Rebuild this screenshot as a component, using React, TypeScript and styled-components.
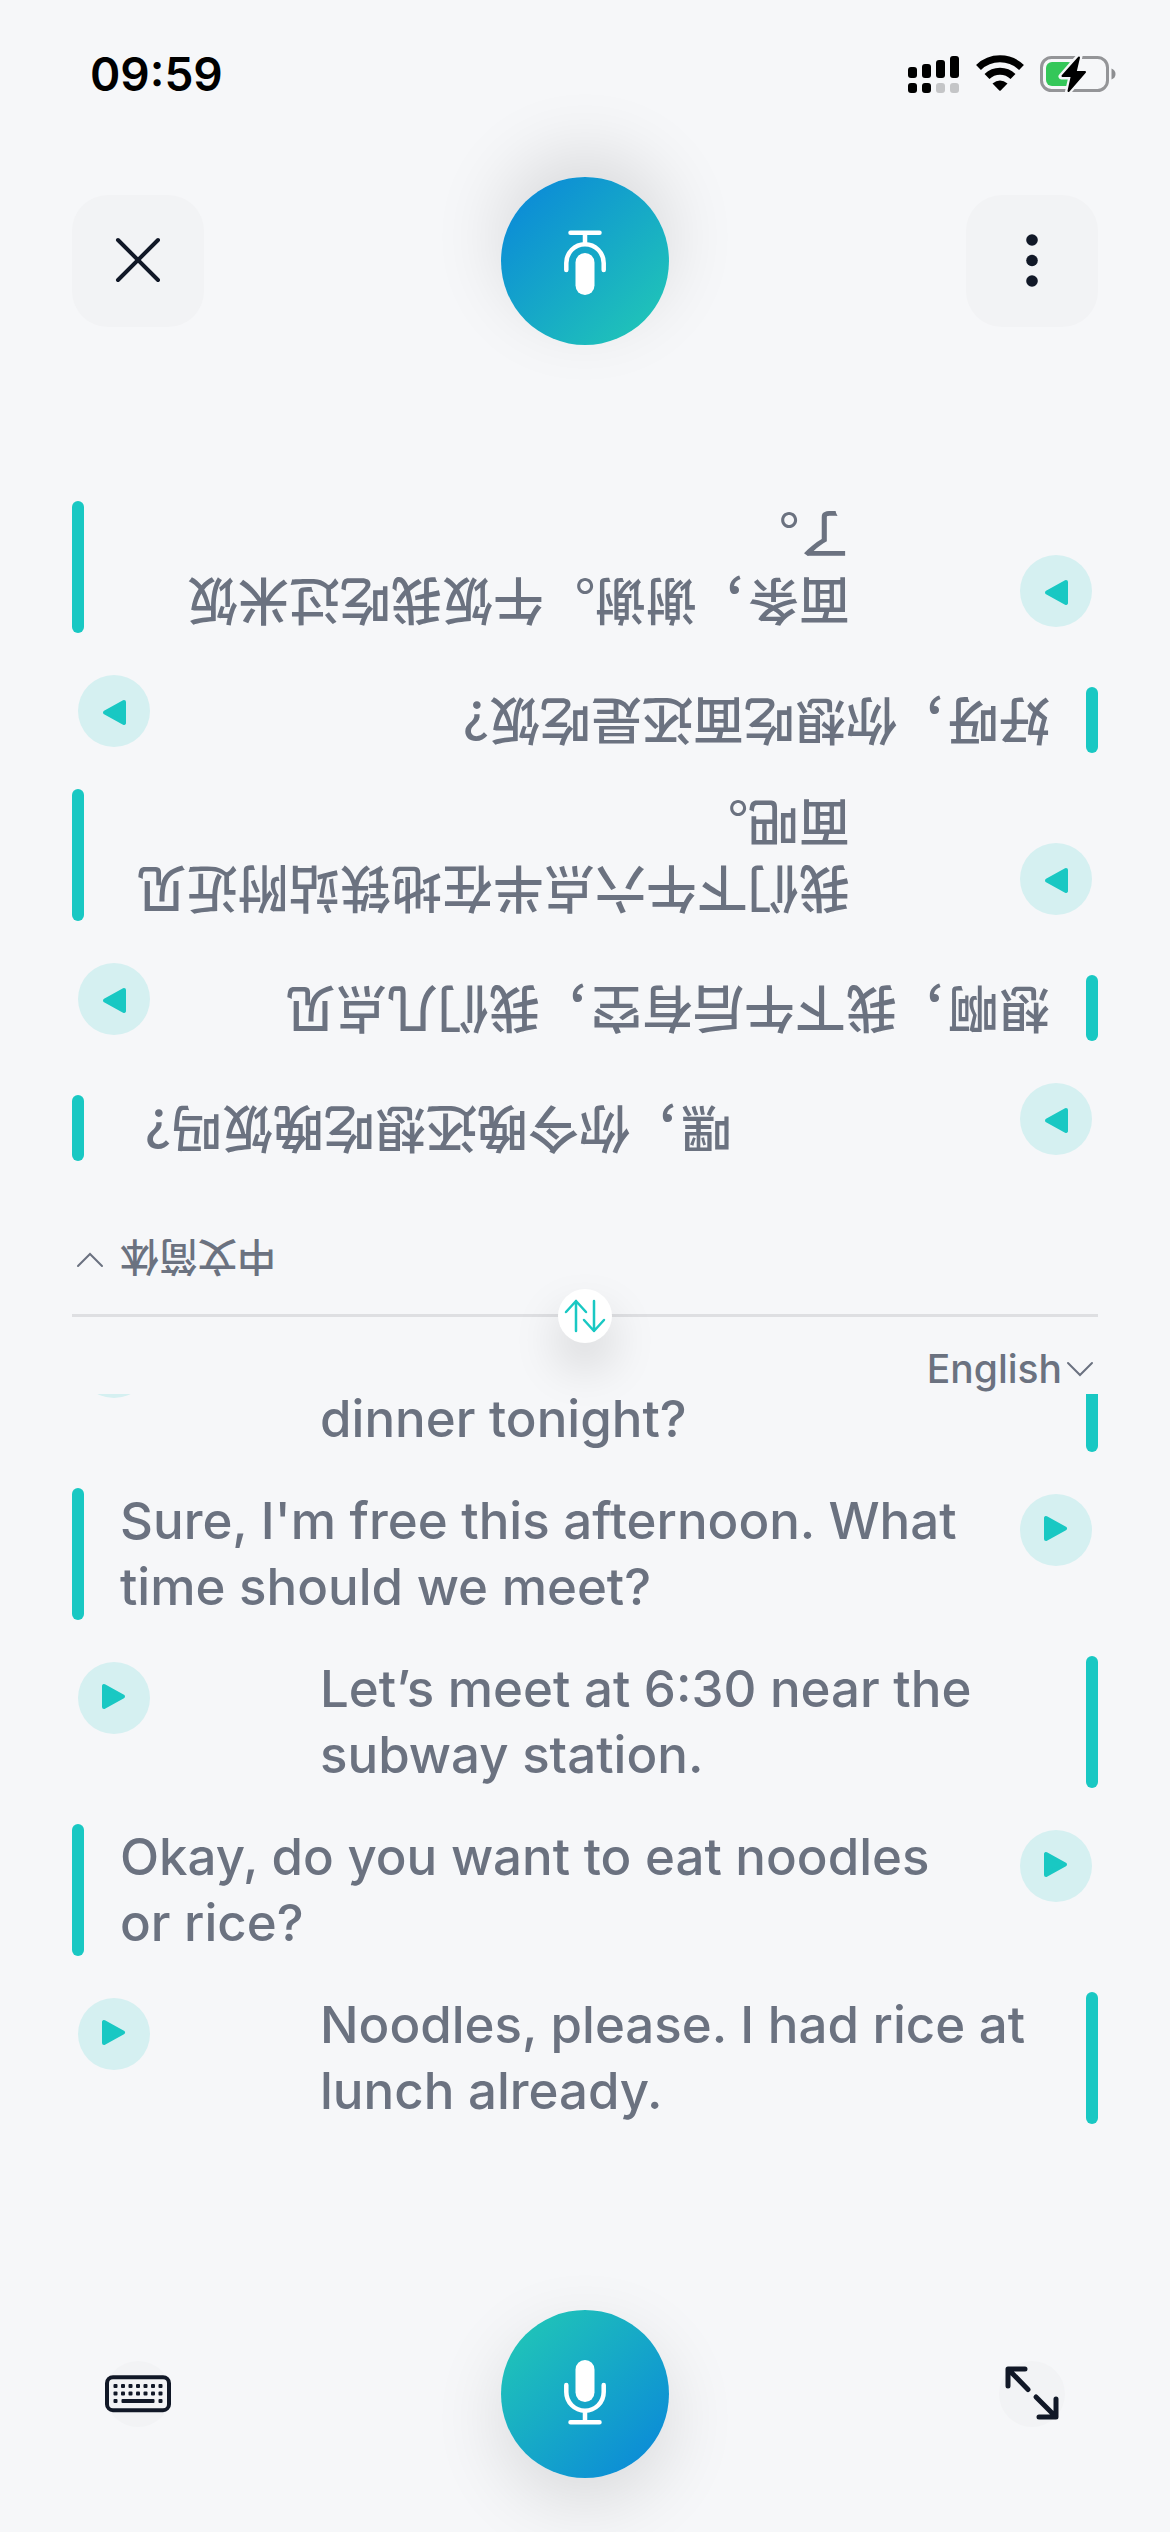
import React from "react";
import styled, { createGlobalStyle, css } from "styled-components";

const color = {
  page: "#f6f7f9",
  soft: "#f2f3f5",
  ink: "#111827",
  text: "#6b7280",
  teal: "#19c8c3",
  tealSoft: "#d5f0f1",
  line: "#dedfe2",
};

const latin = `Inter, "Noto Sans CJK SC", sans-serif`;
const chinese = `"Noto Sans CJK SC", Inter, sans-serif`;

const GlobalStyle = createGlobalStyle`
  *, *::before, *::after { box-sizing: border-box; }
  body { margin: 0; background: ${color.page}; font-family: ${latin}; }
  button { margin: 0; padding: 0; border: 0; background: none; font: inherit; color: inherit; cursor: pointer; }
  svg { display: block; flex: none; }
`;

const Screen = styled.main`
  display: flex;
  flex-direction: column;
  height: 100vh;
  overflow: hidden;
  background: ${color.page};
`;

const StatusBar = styled.header`
  display: flex;
  justify-content: space-between;
  align-items: flex-start;
  flex: none;
  height: 177px;
  padding: 44px 54px 0 90px;
`;

const Clock = styled.time`
  font-size: 46px;
  line-height: 60px;
  font-weight: 600;
  color: #000;
`;

const StatusIcons = styled.div`
  display: flex;
  align-items: center;
  gap: 16px;
  height: 60px;
`;

const ControlBar = styled.nav`
  display: flex;
  justify-content: space-between;
  align-items: center;
  flex: none;
  height: 168px;
  padding: 0 72px;
`;

const SquareButton = styled.button`
  display: grid;
  place-items: center;
  width: 132px;
  height: 132px;
  border-radius: 36px;
  background: ${color.soft};
`;

const PlainButton = styled.button`
  display: grid;
  place-items: center;
  width: 132px;
  height: 132px;
`;

const IconDisc = styled.span`
  display: grid;
  place-items: center;
  width: 66px;
  height: 66px;
  border-radius: 50%;
  background: ${color.soft};
`;

const MicButton = styled.button<{ $flipped?: boolean }>`
  display: grid;
  place-items: center;
  width: 168px;
  height: 168px;
  border-radius: 50%;
  background: linear-gradient(135deg, #20c4b8 10%, #0b8ad8 92%);
  box-shadow: 0 24px 72px rgba(0, 0, 0, 0.12);
  ${(p) => p.$flipped && css`transform: rotate(180deg);`}
`;

const Panel = styled.section<{ $flipped?: boolean }>`
  display: flex;
  flex-direction: column;
  ${(p) =>
    p.$flipped
      ? css`
          flex: none;
          transform: rotate(180deg);
        `
      : css`
          flex: 1;
          min-height: 0;
        `}
`;

const LanguageRow = styled.div<{ $top: number }>`
  display: flex;
  justify-content: flex-end;
  align-items: center;
  flex: none;
  height: 77px;
  padding: ${(p) => p.$top}px 72px 0;
`;

const LanguageButton = styled.button<{ $gap: number }>`
  display: flex;
  align-items: center;
  gap: ${(p) => p.$gap}px;
  font-size: 39px;
  line-height: 46px;
  font-weight: 500;
  color: ${color.text};

  &:lang(zh) {
    font-family: ${chinese};
  }
`;

const Messages = styled.ol<{ $flipped?: boolean }>`
  display: flex;
  flex-direction: column;
  gap: 36px;
  margin: 0;
  list-style: none;
  ${(p) =>
    p.$flipped
      ? css`
          padding: 76px 72px 156px;
        `
      : css`
          flex: 1;
          min-height: 0;
          justify-content: flex-end;
          overflow: hidden;
          padding: 0 72px 186px;
        `}
`;

const Message = styled.li<{ $own: boolean }>`
  display: flex;
  flex: none;
  flex-direction: ${(p) => (p.$own ? "row" : "row-reverse")};
  justify-content: space-between;
  align-items: flex-start;
  min-height: 84px;
`;

const Bubble = styled.div<{ $own: boolean; $wide?: boolean }>`
  display: flex;
  flex: ${(p) => (p.$wide ? "1" : "0 1 auto")};
  flex-direction: ${(p) => (p.$own ? "row" : "row-reverse")};
  gap: 36px;
  max-width: ${(p) => (p.$own ? 912 : 778)}px;
`;

const Marker = styled.span`
  flex: none;
  width: 12px;
  border-radius: 6px;
  background: ${color.teal};
`;

const MessageText = styled.p<{ $wide?: boolean }>`
  flex: ${(p) => (p.$wide ? "1" : "0 1 auto")};
  margin: 0;
  font-size: 51px;
  line-height: 66px;
  font-weight: 500;
  white-space: pre-line;
  color: ${color.text};
`;

const PlayButton = styled.button`
  flex: none;
  width: 72px;
  height: 72px;
  margin: 6px;
  border-radius: 50%;
  background: ${color.tealSoft};
`;

const Divider = styled.div`
  position: relative;
  z-index: 1;
  flex: none;
  height: 3px;
  margin: 0 72px;
  background: ${color.line};
`;

const SwapButton = styled.button`
  position: absolute;
  top: 50%;
  left: 50%;
  display: grid;
  place-items: center;
  width: 54px;
  height: 54px;
  border-radius: 50%;
  background: #fff;
  transform: translate(-50%, -50%);
  box-shadow: 0 24px 48px rgba(0, 0, 0, 0.15);
`;

const Footer = styled.div`
  flex: none;
  padding-bottom: 54px;
`;

function SignalIcon() {
  return (
    <svg width="52" height="38" viewBox="0 0 52 38" aria-hidden="true">
      <rect x="0" y="12" width="9" height="11" rx="3" />
      <rect x="14" y="9" width="9" height="14" rx="3" />
      <rect x="28" y="5" width="9" height="18" rx="3" />
      <rect x="42" y="1" width="9" height="22" rx="3" />
      <rect x="0" y="28" width="9" height="10" rx="3" />
      <rect x="14" y="28" width="9" height="10" rx="3" />
      <rect x="28" y="28" width="9" height="10" rx="3" fill="#c4c5c7" />
      <rect x="42" y="28" width="9" height="10" rx="3" fill="#c4c5c7" />
    </svg>
  );
}

function WifiIcon() {
  return (
    <svg width="48" height="38" viewBox="0 0 48 38" aria-hidden="true">
      <path d="M2.500 12.500A31 31 0 0 1 45.500 12.500" fill="none" stroke="#000" strokeWidth="7" />
      <path d="M11 21.500A18.500 18.500 0 0 1 37 21.500" fill="none" stroke="#000" strokeWidth="7" />
      <path d="M16.500 28.500Q24 22.500 31.500 28.500L24.700 35.500Q24 36.200 23.300 35.500Z" />
    </svg>
  );
}

function BatteryIcon() {
  return (
    <svg width="76" height="40" viewBox="0 0 76 40" aria-hidden="true">
      <rect x="1.500" y="3.500" width="66" height="33" rx="10" fill="none" stroke="#949598" strokeWidth="3" />
      <path d="M71.500 14.500Q75.500 16 75.500 20T71.500 25.500Z" fill="#8d8e91" />
      <rect x="6" y="8" width="28" height="24" rx="6" fill="#34c759" />
      <path
        d="M39.500 2 21.500 22.500H31.500L28 38 45.500 17.500H36Z"
        stroke={color.page}
        strokeWidth="6"
        strokeLinejoin="round"
      />
      <path d="M39 3.500 22.500 22H31.800L28.500 37 45 18H35.600Z" stroke="#000" strokeWidth="2" strokeLinejoin="round" />
    </svg>
  );
}

function CloseIcon() {
  return (
    <svg width="48" height="48" viewBox="-24 -24 48 48" aria-hidden="true">
      <path d="M-20-21 20 19M20-21-20 19" stroke={color.ink} strokeWidth="4" strokeLinecap="round" />
    </svg>
  );
}

function MoreIcon() {
  return (
    <svg width="12" height="54" viewBox="-6 -27 12 54" fill={color.ink} aria-hidden="true">
      <circle cy="-21" r="5.800" />
      <circle cy="-0.500" r="5.800" />
      <circle cy="20" r="5.800" />
    </svg>
  );
}

function MicIcon() {
  return (
    <svg width="48" height="72" viewBox="-24 -36 48 72" aria-hidden="true">
      <rect x="-9.500" y="-34" width="19" height="42" rx="9.500" fill="#fff" />
      <g fill="none" stroke="#fff" strokeWidth="4.500" strokeLinecap="round">
        <path d="M-18.700-9V-2A18.700 18.700 0 0 0 18.700-2V-9" />
        <path d="M0 18V27M-14.500 28.300H14.500" />
      </g>
    </svg>
  );
}

function ChevronIcon() {
  return (
    <svg width="36" height="36" viewBox="0 0 36 36" aria-hidden="true">
      <path d="M6 12 18 24 30 12" fill="none" stroke={color.text} strokeWidth="2" strokeLinecap="round" />
    </svg>
  );
}

function PlayIcon() {
  return (
    <svg width="72" height="72" viewBox="0 0 72 72" aria-hidden="true">
      <path d="M26 24V45L45 34.500Z" fill={color.teal} stroke={color.teal} strokeWidth="4" strokeLinejoin="round" />
    </svg>
  );
}

function SwapIcon() {
  return (
    <svg width="54" height="54" viewBox="-27 -27 54 54" aria-hidden="true">
      <g fill="none" stroke={color.teal} strokeWidth="2.500" strokeLinecap="round" strokeLinejoin="round">
        <path d="M-9 15V-15M-19-4-9-15 1-4" />
        <path d="M9-15V15M-1 4 9 15 19 4" />
      </g>
    </svg>
  );
}

function KeyboardIcon() {
  const columns = [-22.5, -15, -7.5, 0, 7.5, 15, 22.5];
  return (
    <svg width="66" height="38" viewBox="-33 -19 66 38" fill={color.ink} aria-hidden="true">
      <rect x="-31" y="-16.800" width="62" height="33" rx="6" fill="none" stroke={color.ink} strokeWidth="4" />
      {[-8, -0.5].map((y) => columns.map((x) => <rect key={`${x}${y}`} x={x - 2} y={y - 2} width="4" height="4" rx="1" />))}
      <rect x="-24.500" y="5" width="4" height="4" rx="1" />
      <rect x="-16.500" y="5" width="33" height="4" rx="1" />
      <rect x="20.500" y="5" width="4" height="4" rx="1" />
    </svg>
  );
}

function ExpandIcon() {
  return (
    <svg width="60" height="60" viewBox="-30 -30 60 60" aria-hidden="true">
      <g fill="none" stroke={color.ink} strokeWidth="5" strokeLinecap="round" strokeLinejoin="round">
        <path d="M-7-25H-24V-8M-23-24-4-4.500" />
        <path d="M24 5V23H7M4 3 23 22" />
      </g>
    </svg>
  );
}

type Line = { own: boolean; text: string; wide?: boolean };

const chineseLines: Line[] = [
  { own: false, text: "嘿，你今晚还想吃晚饭吗？" },
  { own: true, text: "想啊，我下午后有空，我们几点见" },
  { own: false, text: "我们下午六点半在地铁站附近见面吧。" },
  { own: true, text: "好呀，你想吃面还是吃饭？" },
  { own: false, text: "面条，谢谢。午饭我吃过米饭了。" },
];

const englishLines: Line[] = [
  { own: false, text: "\ndinner tonight?", wide: true },
  { own: true, text: "Sure, I'm free this afternoon. What time should we meet?" },
  { own: false, text: "Let’s meet at 6:30 near the subway station." },
  { own: true, text: "Okay, do you want to eat noodles or rice?" },
  { own: false, text: "Noodles, please. I had rice at lunch already." },
];

function Conversation({ lines, flipped, lang }: { lines: Line[]; flipped?: boolean; lang: string }) {
  return (
    <Messages $flipped={flipped} lang={lang}>
      {lines.map((line) => (
        <Message key={line.text} $own={line.own}>
          <Bubble $own={line.own} $wide={line.wide}>
            <Marker />
            <MessageText $wide={line.wide}>{line.text}</MessageText>
          </Bubble>
          <PlayButton type="button" aria-label="Play">
            <PlayIcon />
          </PlayButton>
        </Message>
      ))}
    </Messages>
  );
}

export default function App() {
  return (
    <>
      <GlobalStyle />
      <Screen>
        <StatusBar>
          <Clock>09:59</Clock>
          <StatusIcons>
            <SignalIcon />
            <WifiIcon />
            <BatteryIcon />
          </StatusIcons>
        </StatusBar>

        <ControlBar>
          <SquareButton type="button" aria-label="Close">
            <CloseIcon />
          </SquareButton>
          <MicButton type="button" aria-label="Speak Chinese" $flipped>
            <MicIcon />
          </MicButton>
          <SquareButton type="button" aria-label="More">
            <MoreIcon />
          </SquareButton>
        </ControlBar>

        <Panel $flipped>
          <LanguageRow $top={30}>
            <LanguageButton type="button" lang="zh-CN" $gap={12}>
              中文简体
              <ChevronIcon />
            </LanguageButton>
          </LanguageRow>
          <Conversation lines={chineseLines} lang="zh-CN" flipped />
        </Panel>

        <Divider>
          <SwapButton type="button" aria-label="Swap languages">
            <SwapIcon />
          </SwapButton>
        </Divider>

        <Panel>
          <LanguageRow $top={26}>
            <LanguageButton type="button" $gap={0}>
              English
              <ChevronIcon />
            </LanguageButton>
          </LanguageRow>
          <Conversation lines={englishLines} lang="en" />
          <Footer>
            <ControlBar>
              <PlainButton type="button" aria-label="Keyboard">
                <IconDisc>
                  <KeyboardIcon />
                </IconDisc>
              </PlainButton>
              <MicButton type="button" aria-label="Speak English">
                <MicIcon />
              </MicButton>
              <PlainButton type="button" aria-label="Full screen">
                <IconDisc>
                  <ExpandIcon />
                </IconDisc>
              </PlainButton>
            </ControlBar>
          </Footer>
        </Panel>
      </Screen>
    </>
  );
}
